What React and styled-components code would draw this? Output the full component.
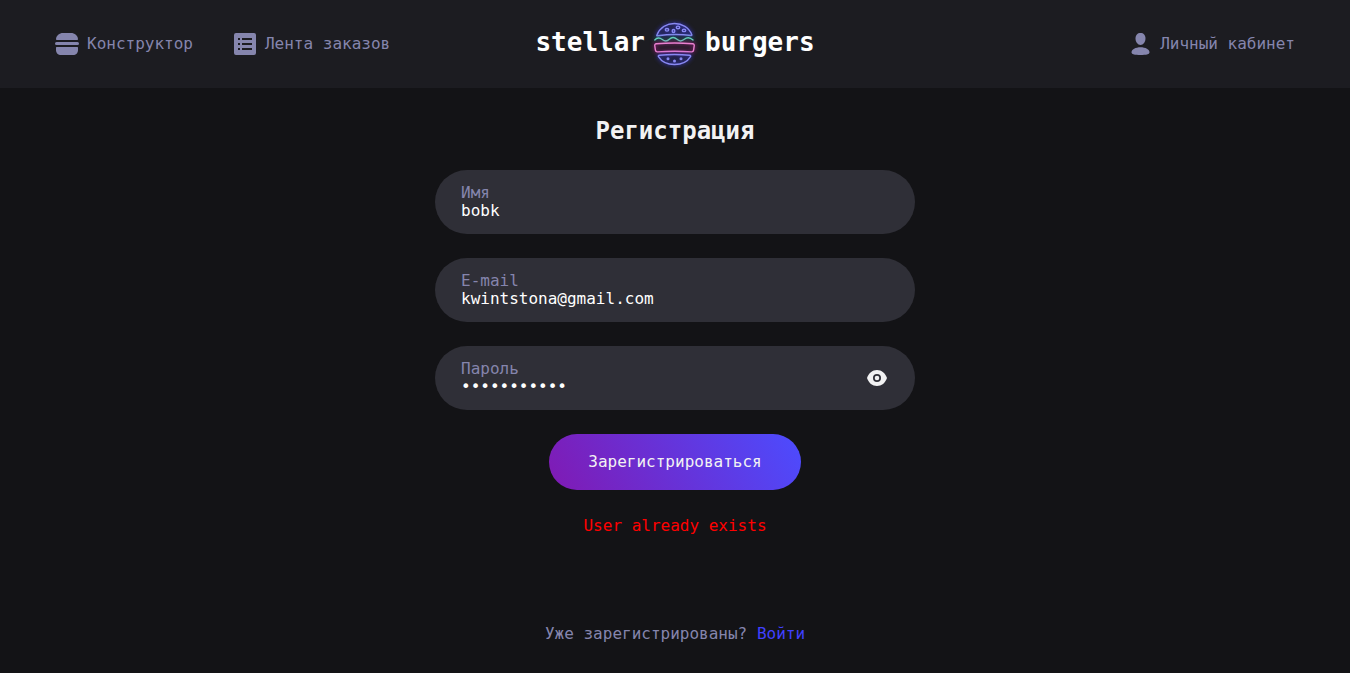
import React, { useState } from "react";
import styled, { createGlobalStyle } from "styled-components";

const GlobalStyle = createGlobalStyle`
  *, *::before, *::after { box-sizing: border-box; }
  body {
    margin: 0;
    background: #131316;
    color: #f2f2f3;
    font: 400 16px/24px "DejaVu Sans Mono", "Liberation Mono", monospace;
  }
  a { color: inherit; text-decoration: none; }
`;

const Header = styled.header`
  background: #1c1c21;
  padding: 16px 32px;
`;

const HeaderRow = styled.div`
  display: grid;
  grid-template-columns: 1fr auto 1fr;
  align-items: center;
  max-width: 1280px;
  min-height: 56px;
  margin: 0 auto;
`;

const Nav = styled.nav`
  display: flex;
  justify-content: ${({ $end }) => ($end ? "flex-end" : "flex-start")};
`;

const NavLink = styled.a`
  display: flex;
  align-items: center;
  gap: 8px;
  padding: 16px 20px;
  color: #8585ad;
  white-space: nowrap;
`;

const Icon = styled.svg`
  display: block;
  flex: none;
  width: 24px;
  height: 24px;
  fill: currentColor;
`;

const Logo = styled.a`
  display: grid;
  grid-template-columns: 1fr auto 1fr;
  align-items: center;
  gap: 8px;
  color: #ffffff;
`;

const LogoWord = styled.span`
  font-size: 26px;
  font-weight: 700;
  line-height: 26px;
  padding-bottom: 4px;
`;

const LogoMark = styled.svg`
  display: block;
  width: 44px;
  height: 44px;
  overflow: visible;
  fill: none;
  stroke-width: 1.4;
  stroke-linejoin: round;
  stroke-linecap: round;
`;

const NeonPart = styled.g`
  stroke: ${({ $color }) => $color};
  filter: drop-shadow(0 0 2px ${({ $glow }) => $glow});
`;

const Main = styled.main`
  display: flex;
  flex-direction: column;
  align-items: center;
  padding: 28px 16px 24px;
`;

const Title = styled.h1`
  margin: 0 0 24px;
  font-size: 24px;
  line-height: 30px;
  font-weight: 700;
`;

const Form = styled.form`
  display: flex;
  flex-direction: column;
  align-items: center;
  gap: 24px;
  width: 100%;
  max-width: 480px;
`;

const Field = styled.div`
  display: flex;
  align-items: center;
  width: 100%;
  height: 64px;
  padding: 0 26px;
  border-radius: 32px;
  background: #2f2f37;
`;

const FieldBody = styled.div`
  display: flex;
  flex: 1;
  flex-direction: column;
  min-width: 0;
`;

const Label = styled.label`
  color: #8585ad;
  line-height: 18px;
`;

const Input = styled.input`
  width: 100%;
  height: 18px;
  padding: 0;
  border: 0;
  outline: 0;
  background: transparent;
  color: #ffffff;
  font: inherit;
  line-height: 18px;
`;

const IconButton = styled.button`
  padding: 0;
  border: 0;
  background: transparent;
  color: #f2f2f3;
  cursor: pointer;
`;

const SubmitButton = styled.button`
  height: 56px;
  padding: 0 39px;
  border: 0;
  border-radius: 28px;
  background: linear-gradient(60deg, #801ab3 0%, #4c4cff 100%);
  color: #f2f2f3;
  font: inherit;
  cursor: pointer;
`;

const ErrorText = styled.p`
  margin: 0;
  color: #ff0000;
`;

const SignIn = styled.p`
  margin: 84px 0 0;
  color: #8585ad;
`;

const AccentLink = styled.a`
  color: #4040ff;
`;

function BurgerIcon() {
  return (
    <Icon viewBox="0 0 24 24" aria-hidden="true">
      <path d="M1 7.300C1 3.500 4.500 1 8 1h8c3.500 0 7 2.500 7 6.300 0 .5-.3.700-.8.700H1.800C1.300 8 1 7.800 1 7.300Z" />
      <rect x="0" y="10" width="24" height="3" rx="1.500" />
      <path d="M1 15.500c0-.3.200-.5.500-.5h21c.3 0 .5.200.5.500V18c0 3-2 5-5 5H6c-3 0-5-2-5-5Z" />
    </Icon>
  );
}

function ListIcon() {
  return (
    <Icon viewBox="0 0 24 24" aria-hidden="true">
      <path
        fillRule="evenodd"
        d="M3 1h18a2 2 0 0 1 2 2v18a2 2 0 0 1-2 2H3a2 2 0 0 1-2-2V3a2 2 0 0 1 2-2Zm2 5v2h2V6Zm4 0v2h10V6Zm-4 5v2h2v-2Zm4 0v2h10v-2Zm-4 5v2h2v-2Zm4 0v2h10v-2Z"
      />
    </Icon>
  );
}

function ProfileIcon() {
  return (
    <Icon viewBox="0 0 24 24" aria-hidden="true">
      <path d="M12.500 1c3 0 5 2 5 5.500s-2.200 6.500-5 6.500-5-3-5-6.500 2-5.500 5-5.500Z" />
      <path d="M3.500 20.500c0-3 4-5.200 9-5.200s9 2.200 9 5.200c0 1.800-3.500 2.500-9 2.500s-9-.7-9-2.500Z" />
    </Icon>
  );
}

function EyeIcon() {
  return (
    <Icon viewBox="0 0 24 24" aria-hidden="true">
      <path
        fillRule="evenodd"
        d="M12 4c4.600 0 8.300 3 10 8-1.700 5-5.400 8-10 8s-8.300-3-10-8c1.700-5 5.400-8 10-8Zm0 4a4 4 0 1 0 0 8 4 4 0 0 0 0-8Zm0 1.700a2.300 2.300 0 1 1 0 4.600 2.300 2.300 0 0 1 0-4.600Z"
      />
    </Icon>
  );
}

function NeonBurger() {
  return (
    <LogoMark viewBox="0 0 44 44" aria-hidden="true">
      <NeonPart $color="#8888f2" $glow="#4040ff">
        <path d="M3.800 13.200C7 5.500 14 1.500 21.500 1.500S36 5.500 38.800 12.700c.2.600-.1.900-.7.800C27 12 16 12.200 4.500 13.800c-.6.100-.9-.1-.7-.6Z" />
        <ellipse cx="14" cy="7.800" rx="1.700" ry="1.300" />
        <ellipse cx="25" cy="5.400" rx="1.700" ry="1.300" />
        <ellipse cx="20.500" cy="9" rx="1.300" ry="1.500" />
        <ellipse cx="31" cy="8.400" rx="1.700" ry="1.200" />
      </NeonPart>
      <NeonPart $color="#63cfb9" $glow="#148878">
        <path d="M1.800 18c2-2.500 5-2.500 7.500-.5s4.500 2.300 7-.2 5-2.500 7.700 0 4.700 2.200 7.300 0 5.500-2.300 8.700.7" />
      </NeonPart>
      <NeonPart $color="#ea80d0" $glow="#d01ca4">
        <path d="M3.500 21.700c12-.9 24-.9 36 0 1.400.1 1.900.8 1.700 2.200l-.6 4.300c-.2 1.300-.8 1.800-2 1.700-11.500-.9-22.500-.9-34 0-1.300.1-2-.4-2.200-1.700l-.6-4.300c-.2-1.400.3-2.100 1.700-2.200Z" />
      </NeonPart>
      <NeonPart $color="#8888f2" $glow="#4040ff">
        <path d="M6.500 33.200c10-1 20-1 30 0 1 .1 1.400.6 1 1.500-3 5.100-9 7.800-16 7.800s-13-2.700-16-7.800c-.5-.9 0-1.400 1-1.500Z" />
        <circle cx="15" cy="36.700" r=".8" />
        <circle cx="21.500" cy="39" r=".8" />
        <circle cx="28" cy="36.700" r=".8" />
      </NeonPart>
    </LogoMark>
  );
}

function TextField({ id, label, action, ...inputProps }) {
  return (
    <Field>
      <FieldBody>
        <Label htmlFor={id}>{label}</Label>
        <Input id={id} name={id} {...inputProps} />
      </FieldBody>
      {action}
    </Field>
  );
}

export default function App() {
  const [visible, setVisible] = useState(false);

  return (
    <>
      <GlobalStyle />
      <Header>
        <HeaderRow>
          <Nav>
            <NavLink href="#constructor">
              <BurgerIcon />
              Конструктор
            </NavLink>
            <NavLink href="#feed">
              <ListIcon />
              Лента заказов
            </NavLink>
          </Nav>
          <Logo href="#home">
            <LogoWord>stellar</LogoWord>
            <NeonBurger />
            <LogoWord>burgers</LogoWord>
          </Logo>
          <Nav $end>
            <NavLink href="#profile">
              <ProfileIcon />
              Личный кабинет
            </NavLink>
          </Nav>
        </HeaderRow>
      </Header>
      <Main>
        <Title>Регистрация</Title>
        <Form onSubmit={(event) => event.preventDefault()}>
          <TextField id="name" label="Имя" type="text" defaultValue="bobk" />
          <TextField id="email" label="E-mail" type="email" defaultValue="kwintstona@gmail.com" />
          <TextField
            id="password"
            label="Пароль"
            type={visible ? "text" : "password"}
            defaultValue="stellar1234"
            action={
              <IconButton
                type="button"
                aria-label="Показать пароль"
                onClick={() => setVisible(!visible)}
              >
                <EyeIcon />
              </IconButton>
            }
          />
          <SubmitButton type="submit">Зарегистрироваться</SubmitButton>
          <ErrorText role="alert">User already exists</ErrorText>
        </Form>
        <SignIn>
          Уже зарегистрированы? <AccentLink href="#login">Войти</AccentLink>
        </SignIn>
      </Main>
    </>
  );
}
